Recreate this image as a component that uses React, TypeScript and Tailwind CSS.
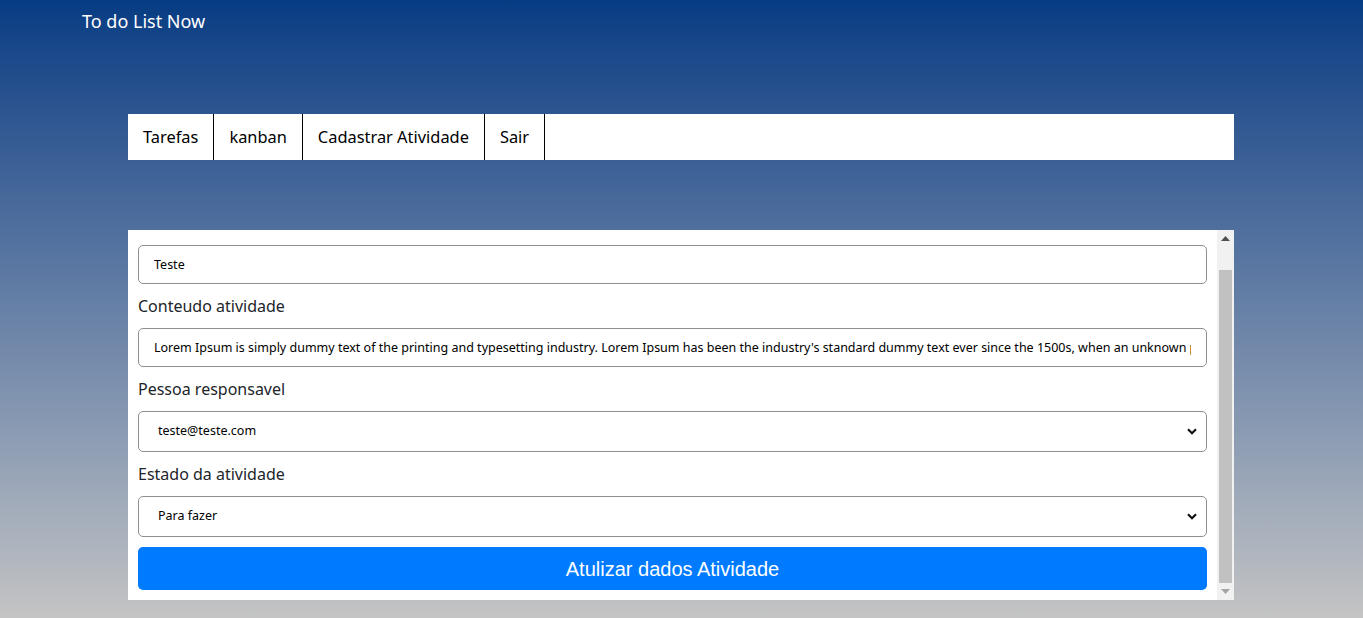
import { useEffect, useRef } from "react";

const font = { fontFamily: '"Noto Sans", "Open Sans", sans-serif' };

function Chevron() {
  return (
    <svg width="10" height="7" viewBox="0 0 10 7" className="shrink-0">
      <path d="M1 1.2 L5 5.2 L9 1.2" fill="none" stroke="#111" strokeWidth="2.2" />
    </svg>
  );
}

function FakeSelect({ value }: { value: string }) {
  return (
    <div className="h-[41px] border border-[#8f8f8f] rounded-[5px] flex items-center justify-between pl-[19px] pr-[9px] text-[12.5px] text-black bg-white">
      <span>{value}</span>
      <Chevron />
    </div>
  );
}

export default function App() {
  const scroller = useRef<HTMLDivElement>(null);

  useEffect(() => {
    if (scroller.current) scroller.current.scrollTop = scroller.current.scrollHeight;
  }, []);

  const navItems = ["Tarefas", "kanban", "Cadastrar Atividade", "Sair"];

  return (
    <div className="min-h-screen bg-gradient-to-b from-[#053c83] to-[#c4c4c4] pb-[18px]" style={font}>
      <header className="h-[42px] pl-[82px] pt-[9px] text-white text-[18px] leading-[24px]">To do List Now</header>

      {/* Nav */}
      <nav className="ml-[128px] mr-[129px] mt-[72px] h-[46px] bg-white flex">
        {navItems.map((item) => (
          <a key={item} className="px-[15px] flex items-center text-[16.4px] text-black border-r border-black">
            {item}
          </a>
        ))}
      </nav>

      {/* Form panel */}
      <div className="ml-[128px] mr-[129px] mt-[70px] h-[370px] bg-white flex">
        <div ref={scroller} className="flex-1 overflow-hidden">
          <div className="p-[10px] flex flex-col gap-[10px]">
            <label className="h-6 text-base text-[#212529] leading-6">Titulo atividade</label>
            <input
              readOnly
              value="Teste"
              className="h-[39px] border border-[#8f8f8f] rounded-[5px] px-[15px] text-[12.5px] text-black outline-none"
              style={font}
            />
            <label className="h-6 text-base text-[#212529] leading-6">Conteudo atividade</label>
            <input
              readOnly
              value="Lorem Ipsum is simply dummy text of the printing and typesetting industry. Lorem Ipsum has been the industry's standard dummy text ever since the 1500s, when an unknown printer took a galley of type and scrambled it to make a type specimen book."
              className="h-[39px] border border-[#8f8f8f] rounded-[5px] px-[15px] text-[12.5px] text-black outline-none"
              style={font}
            />
            <label className="h-6 text-base text-[#212529] leading-6">Pessoa responsavel</label>
            <FakeSelect value="teste@teste.com" />
            <label className="h-6 text-base text-[#212529] leading-6">Estado da atividade</label>
            <FakeSelect value="Para fazer" />
            <button
              className="h-[43px] bg-[#007bff] rounded-[5px] text-white text-[20px]"
              style={{ fontFamily: '"Liberation Sans", Arial, sans-serif' }}
            >
              Atulizar dados Atividade
            </button>
          </div>
        </div>

        {/* scrollbar drawing */}
        <div className="w-[17px] bg-[#f1f1f1] flex flex-col items-center">
          <div className="h-[17px] flex items-center justify-center">
            <svg width="9" height="5" viewBox="0 0 9 5">
              <path d="M0 5 L4.5 0 L9 5 Z" fill="#505050" />
            </svg>
          </div>
          <div className="flex-1 w-full px-[2px] flex flex-col">
            <div className="h-[23px]" />
            <div className="flex-1 bg-[#c1c1c1]" />
          </div>
          <div className="h-[17px] flex items-center justify-center">
            <svg width="9" height="5" viewBox="0 0 9 5">
              <path d="M0 0 L9 0 L4.5 5 Z" fill="#a3a3a3" />
            </svg>
          </div>
        </div>
      </div>
    </div>
  );
}
